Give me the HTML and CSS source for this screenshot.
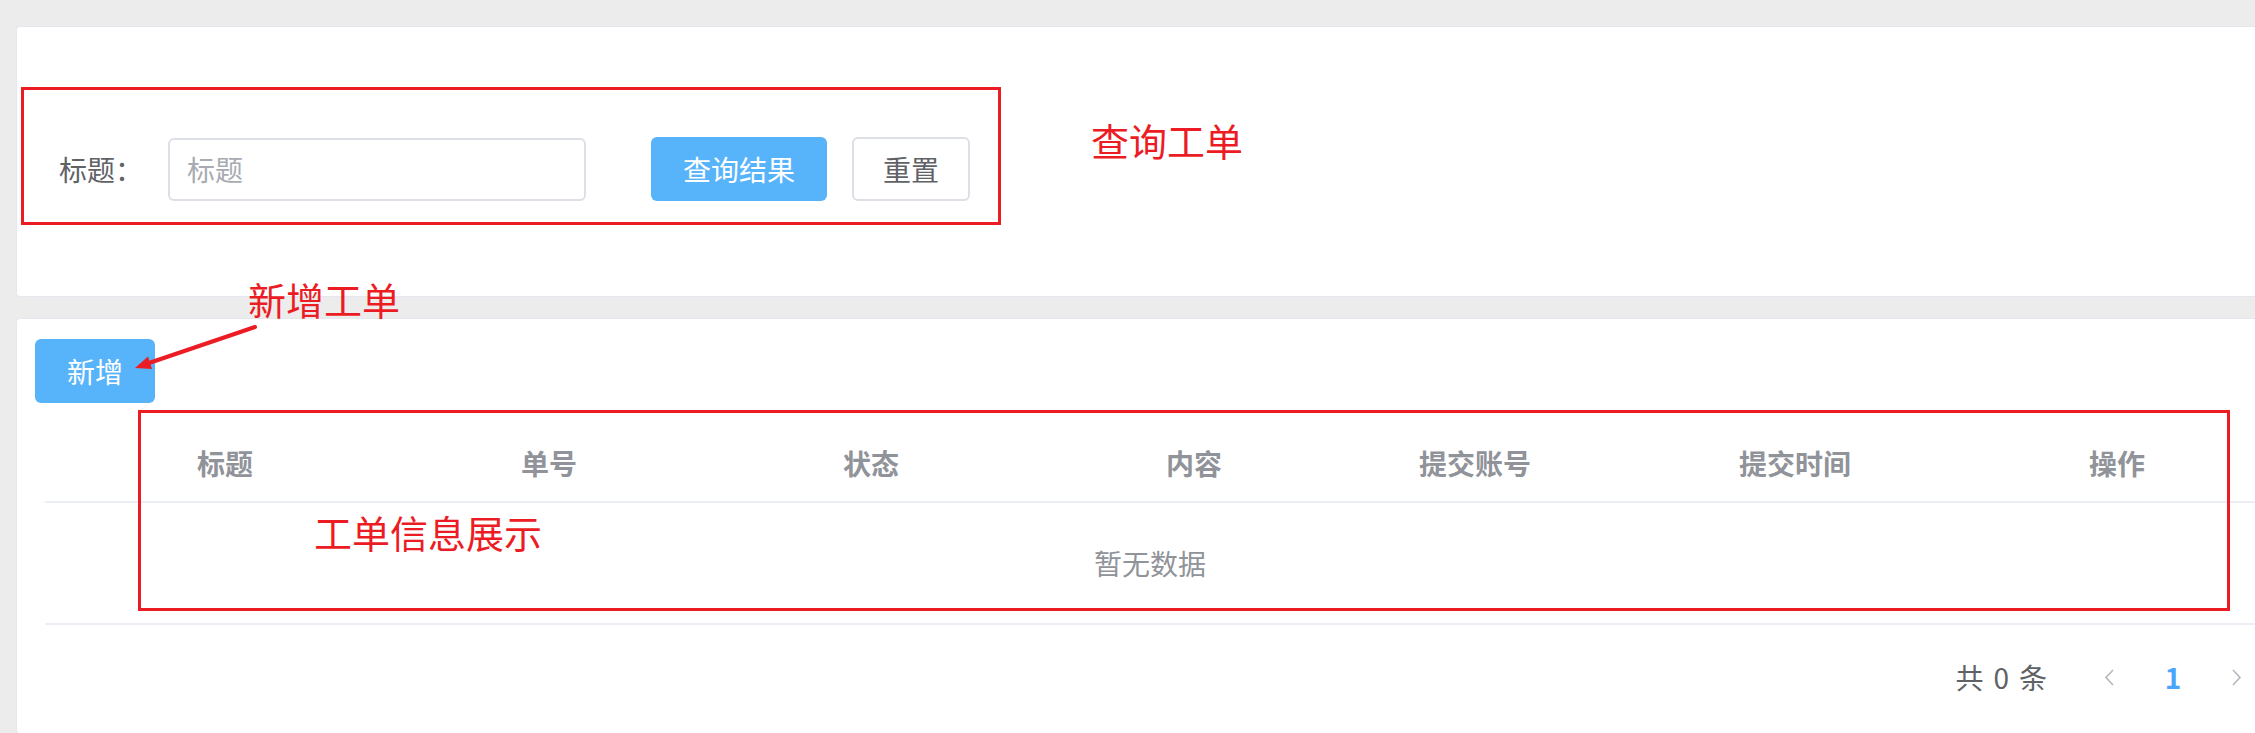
FILE: index.html
```html
<!DOCTYPE html>
<html lang="zh-CN">
<head>
    <meta charset="UTF-8">
    <title>工单管理</title>
    <link rel="stylesheet" href="styles.css">
</head>
<body>
<div class="page">
    <div class="card search-card">
        <form class="search-form">
            <label class="form-label" for="titleI">标题：</label>
            <input type="text" id="titleI" class="form-input" placeholder="标题">
            <button type="button" class="btn btn-primary btn-query">查询结果</button>
            <button type="button" class="btn btn-default btn-reset">重置</button>
        </form>
    </div>

    <div class="card list-card">
        <button type="button" class="btn btn-primary btn-add">新增</button>
        <table class="data-table">
            <colgroup>
                <col class="col-title">
                <col class="col-no">
                <col class="col-state">
                <col class="col-content">
                <col class="col-user">
                <col class="col-time">
                <col class="col-op">
            </colgroup>
            <thead>
                <tr>
                    <th>标题</th><th>单号</th><th>状态</th><th>内容</th><th>提交账号</th><th>提交时间</th><th>操作</th>
                </tr>
            </thead>
            <tbody>
                <tr>
                    <td colspan="7" class="empty">暂无数据</td>
                </tr>
            </tbody>
        </table>
        <div class="pager">
            <span class="pager-total">共<span class="pager-count">0</span>条</span>
            <button type="button" class="pager-btn" disabled>
                <svg width="10" height="17" viewBox="0 0 10 17"><path d="M9 1 L2 8.5 L9 16" fill="none" stroke="currentColor" stroke-width="1.6"/></svg>
            </button>
            <span class="pager-num">1</span>
            <button type="button" class="pager-btn" disabled>
                <svg width="10" height="17" viewBox="0 0 10 17"><path d="M1 1 L8 8.5 L1 16" fill="none" stroke="currentColor" stroke-width="1.6"/></svg>
            </button>
        </div>
    </div>

    <!-- red notes drawn over the screenshot -->
    <div class="mark mark-search"></div>
    <div class="note note-search">查询工单</div>
    <div class="note note-add">新增工单</div>
    <svg class="note-arrow" width="130" height="55" viewBox="0 0 130 55">
        <line x1="125" y1="7" x2="19" y2="43" stroke="#ec1c24" stroke-width="4" stroke-linecap="round"/>
        <polygon points="5,48 22,49 18,36.5" fill="#ec1c24"/>
    </svg>
    <div class="mark mark-table"></div>
    <div class="note note-table">工单信息展示</div>
</div>
</body>
</html>
```

FILE: styles.css
```css
html, body {
    margin: 0;
    padding: 0;
}

body {
    background: #ececec;
    font-family: "Noto Sans CJK SC", "Microsoft YaHei", sans-serif;
    overflow: hidden;
    width: 2255px;
    height: 733px;
}

.page {
    position: relative;
    width: 2300px;
    padding: 26px 0 0 16px;
    box-sizing: border-box;
    display: flex;
    flex-direction: column;
    gap: 21px;
}

.card {
    background: #fff;
    border: 1px solid #e4e7ed;
    border-right: none;
    border-radius: 4px 0 0 4px;
    box-sizing: border-box;
}

/* search card */
.search-card {
    height: 271px;
    padding: 110px 0 0 42px;
}

.search-form {
    display: flex;
    align-items: center;
    height: 64px;
}

.form-label {
    width: 109px;
    font-size: 28px;
    color: #606266;
}

.form-input {
    width: 418px;
    height: 63px;
    box-sizing: border-box;
    border: 2px solid #dcdfe6;
    border-radius: 6px;
    padding: 0 17px;
    font-family: inherit;
    font-size: 28px;
    color: #606266;
    outline: none;
}

.form-input::placeholder {
    color: #a8abb2;
}

.btn {
    height: 64px;
    box-sizing: border-box;
    border-radius: 6px;
    font-family: inherit;
    font-size: 28px;
    padding: 0;
    cursor: pointer;
}

.btn-primary {
    background: #58b4fa;
    border: none;
    color: #fff;
}

.btn-default {
    background: #fff;
    border: 2px solid #dcdfe6;
    color: #606266;
}

.btn-query {
    width: 176px;
    margin-left: 65px;
}

.btn-reset {
    width: 118px;
    margin-left: 25px;
}

/* list card */
.list-card {
    height: 415px;
    padding: 20px 0 0 18px;
    border-bottom: none;
}

.btn-add {
    display: block;
    width: 120px;
}

.data-table {
    margin: 22px 0 0 10px;
    width: 2210px;
    table-layout: fixed;
    border-collapse: collapse;
}

.col-title { width: 360px; }
.col-no { width: 288px; }
.col-state { width: 356px; }
.col-content { width: 290px; }
.col-user { width: 272px; }
.col-time { width: 368px; }
.col-op { width: 276px; }

.data-table th {
    height: 76px;
    padding: 0;
    font-size: 28px;
    font-weight: bold;
    color: #909399;
    text-align: center;
    border-bottom: 2px solid #ebeef5;
}

.data-table .empty {
    height: 120px;
    padding: 0;
    font-size: 28px;
    color: #909399;
    text-align: center;
    border-bottom: 2px solid #ebeef5;
}

.pager {
    display: flex;
    justify-content: flex-end;
    align-items: center;
    height: 64px;
    margin-top: 20px;
    padding-right: 31px;
}

.pager-total {
    font-size: 28px;
    color: #606266;
    margin-right: 30px;
}

.pager-count {
    margin: 0 10px;
}

.pager-btn {
    width: 64px;
    height: 64px;
    border: none;
    background: none;
    padding: 0;
    color: #b4b7bd;
    display: flex;
    align-items: center;
    justify-content: center;
}

.pager-num {
    width: 64px;
    text-align: center;
    font-size: 28px;
    font-weight: bold;
    color: #4aa5fd;
}

/* annotations */
.mark {
    position: absolute;
    border: 3px solid #ec1c24;
    box-sizing: border-box;
    pointer-events: none;
}

.mark-search {
    left: 21px;
    top: 87px;
    width: 980px;
    height: 138px;
}

.mark-table {
    left: 138px;
    top: 410px;
    width: 2092px;
    height: 201px;
}

.note {
    position: absolute;
    font-size: 38px;
    line-height: 38px;
    color: #ec1c24;
    white-space: nowrap;
}

.note-search {
    left: 1091px;
    top: 121px;
}

.note-add {
    left: 248px;
    top: 280px;
}

.note-table {
    left: 314px;
    top: 513px;
}

.note-arrow {
    position: absolute;
    left: 130px;
    top: 320px;
}
```
